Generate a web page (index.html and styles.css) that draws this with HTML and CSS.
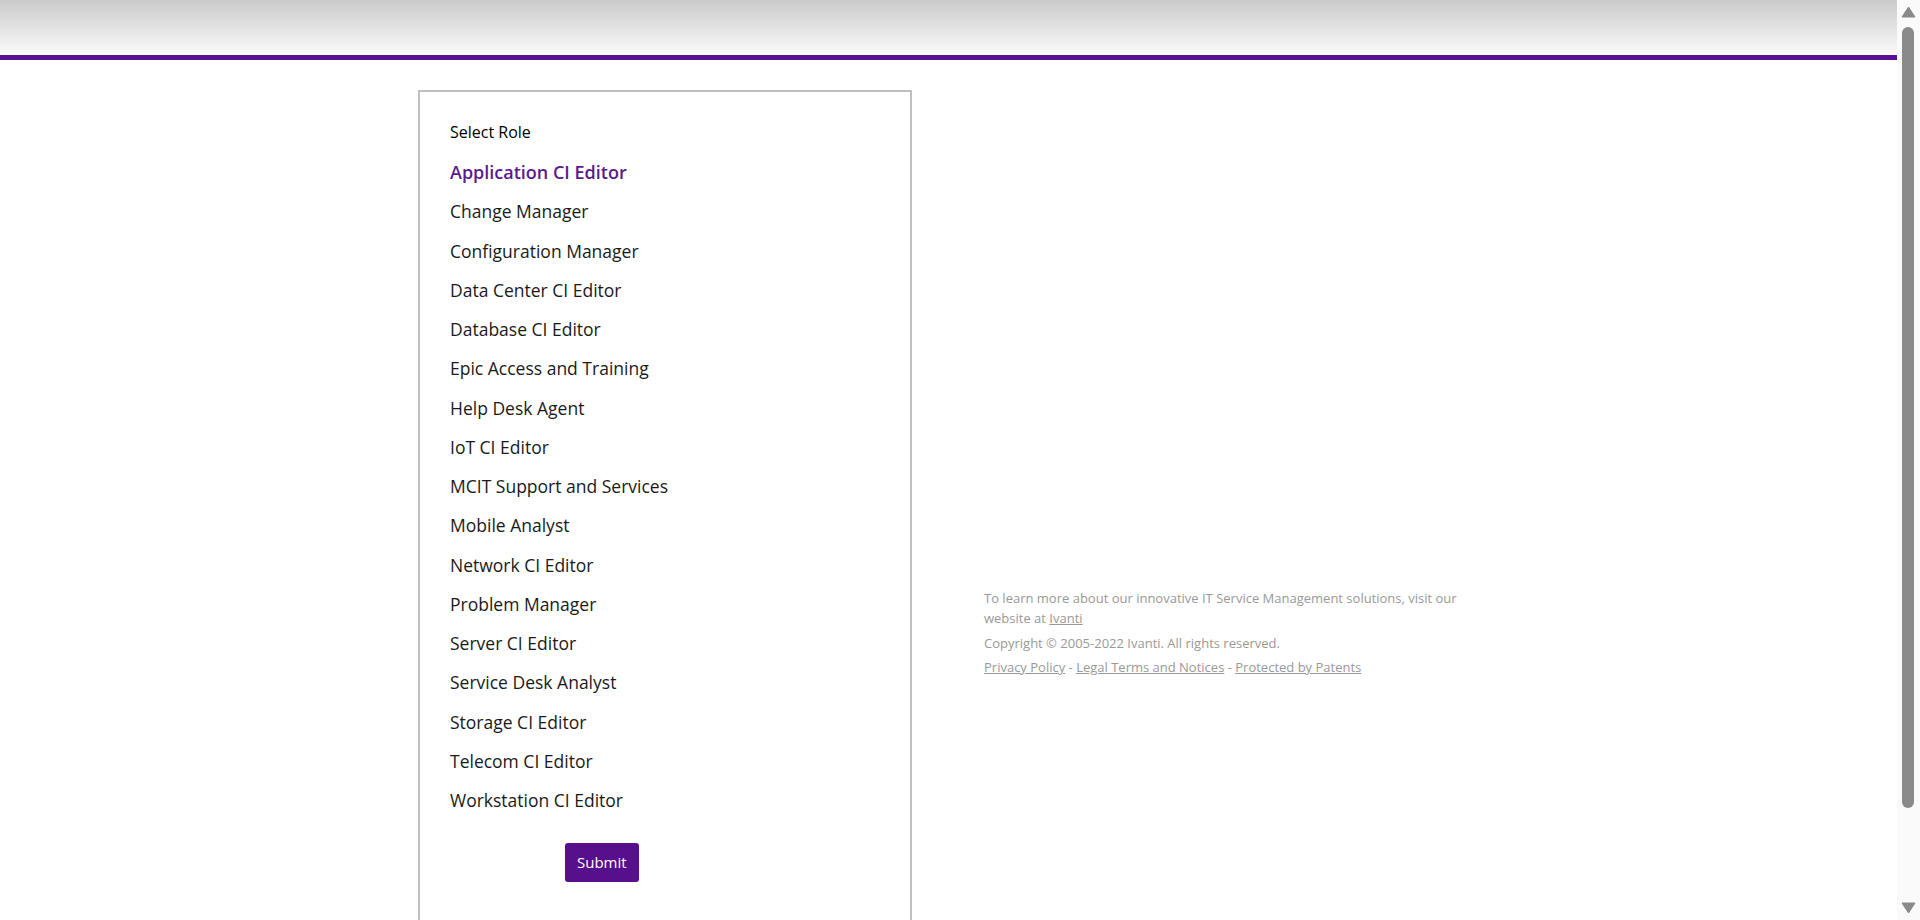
FILE: index.html
```html
<!DOCTYPE html>
<html lang="en">
<head>
<meta charset="utf-8">
<title>Select Role</title>
<link rel="stylesheet" href="styles.css">
</head>
<body>
<div class="window">
  <div class="viewport">
    <header class="topbar"></header>
    <main class="page">
      <section class="card">
        <div class="card-title">Select Role</div>
        <ul class="roles">
          <li class="role role-active">Application CI Editor</li>
          <li class="role">Change Manager</li>
          <li class="role">Configuration Manager</li>
          <li class="role">Data Center CI Editor</li>
          <li class="role">Database CI Editor</li>
          <li class="role">Epic Access and Training</li>
          <li class="role">Help Desk Agent</li>
          <li class="role">IoT CI Editor</li>
          <li class="role">MCIT Support and Services</li>
          <li class="role">Mobile Analyst</li>
          <li class="role">Network CI Editor</li>
          <li class="role">Problem Manager</li>
          <li class="role">Server CI Editor</li>
          <li class="role">Service Desk Analyst</li>
          <li class="role">Storage CI Editor</li>
          <li class="role">Telecom CI Editor</li>
          <li class="role">Workstation CI Editor</li>
        </ul>
        <div class="actions">
          <button class="submit" type="button">Submit</button>
        </div>
      </section>
      <aside class="footer">
        <p class="footer-line">To learn more about our innovative IT Service Management solutions, visit our website at <a href="#">Ivanti</a></p>
        <p class="footer-line footer-copy">Copyright © 2005-2022 Ivanti. All rights reserved.</p>
        <p class="footer-line footer-links"><a href="#">Privacy Policy</a> - <a href="#">Legal Terms and Notices</a> - <a href="#">Protected by Patents</a></p>
      </aside>
    </main>
  </div>
  <div class="scrollbar" aria-hidden="true">
    <svg class="sb-button" width="23" height="23" viewBox="0 0 23 23"><path d="M5 17 L11.5 7 L18 17 Z" fill="#8a8a8a" stroke="#8a8a8a" stroke-width="1" stroke-linejoin="round"/></svg>
    <div class="sb-track"><div class="sb-thumb"></div></div>
    <svg class="sb-button" width="23" height="23" viewBox="0 0 23 23"><path d="M5 6 L18 6 L11.5 16 Z" fill="#8a8a8a" stroke="#8a8a8a" stroke-width="1" stroke-linejoin="round"/></svg>
  </div>
</div>
</body>
</html>
```
FILE: styles.css
```css
html,
body {
  height: 100%;
}
html {
  background: #ffffff;
}
body {
  margin: 0;
  overflow: hidden;
  font-family: "Open Sans", "Noto Sans", "Liberation Sans", sans-serif;
  color: #1a1a1a;
}
.window {
  display: flex;
  height: 100%;
}
.viewport {
  flex: 1;
  min-width: 0;
  overflow: hidden;
}
.scrollbar {
  flex: none;
  width: 23px;
  display: flex;
  flex-direction: column;
  background: #fafafa;
}
.sb-button {
  display: block;
  flex: none;
}
.sb-track {
  flex: 1;
  padding: 4px 6px 0 5px;
}
.sb-thumb {
  width: 12px;
  height: 781px;
  border-radius: 6px;
  background: #8a8a8a;
}
.topbar {
  height: 55px;
  background: linear-gradient(to bottom, #cbcbcb 0%, #e0e0e0 45%, #fafafa 100%);
  border-bottom: 5px solid #5a1191;
}
.page {
  display: flex;
  align-items: flex-start;
  padding: 30px 0 25px 418px;
}
.card {
  box-sizing: border-box;
  width: 494px;
  flex: none;
  border: 2px solid #c0c0c0;
  padding: 30px 30px 115px 30px;
}
.card-title {
  font-size: 16px;
  line-height: 20px;
  color: #000;
  margin-bottom: 11px;
}
.roles {
  list-style: none;
  margin: 0;
  padding: 0;
}
.role {
  font-size: 17.5px;
  line-height: 39.25px;
  height: 39.25px;
  color: #1a1a1a;
  white-space: nowrap;
}
.role-active {
  font-size: 18px;
  color: #5b1a8e;
  font-weight: 600;
}
.actions {
  padding: 23px 0 0 115px;
}
.submit {
  font-family: "Open Sans", "Noto Sans", "Liberation Sans", sans-serif;
  font-size: 15px;
  height: 39px;
  padding: 0 12px;
  line-height: 39px;
  color: #ffffff;
  background: #570f8b;
  border: none;
  border-radius: 3px;
  cursor: pointer;
}
.footer {
  width: 505px;
  flex: none;
  margin: 498px 0 0 72px;
  font-size: 13px;
  line-height: 20px;
  color: #999999;
}
.footer-line {
  margin: 0;
}
.footer-copy {
  margin-top: 5px;
}
.footer-links {
  margin-top: 4px;
}
.footer a {
  color: #999999;
  text-decoration: underline;
}
```
